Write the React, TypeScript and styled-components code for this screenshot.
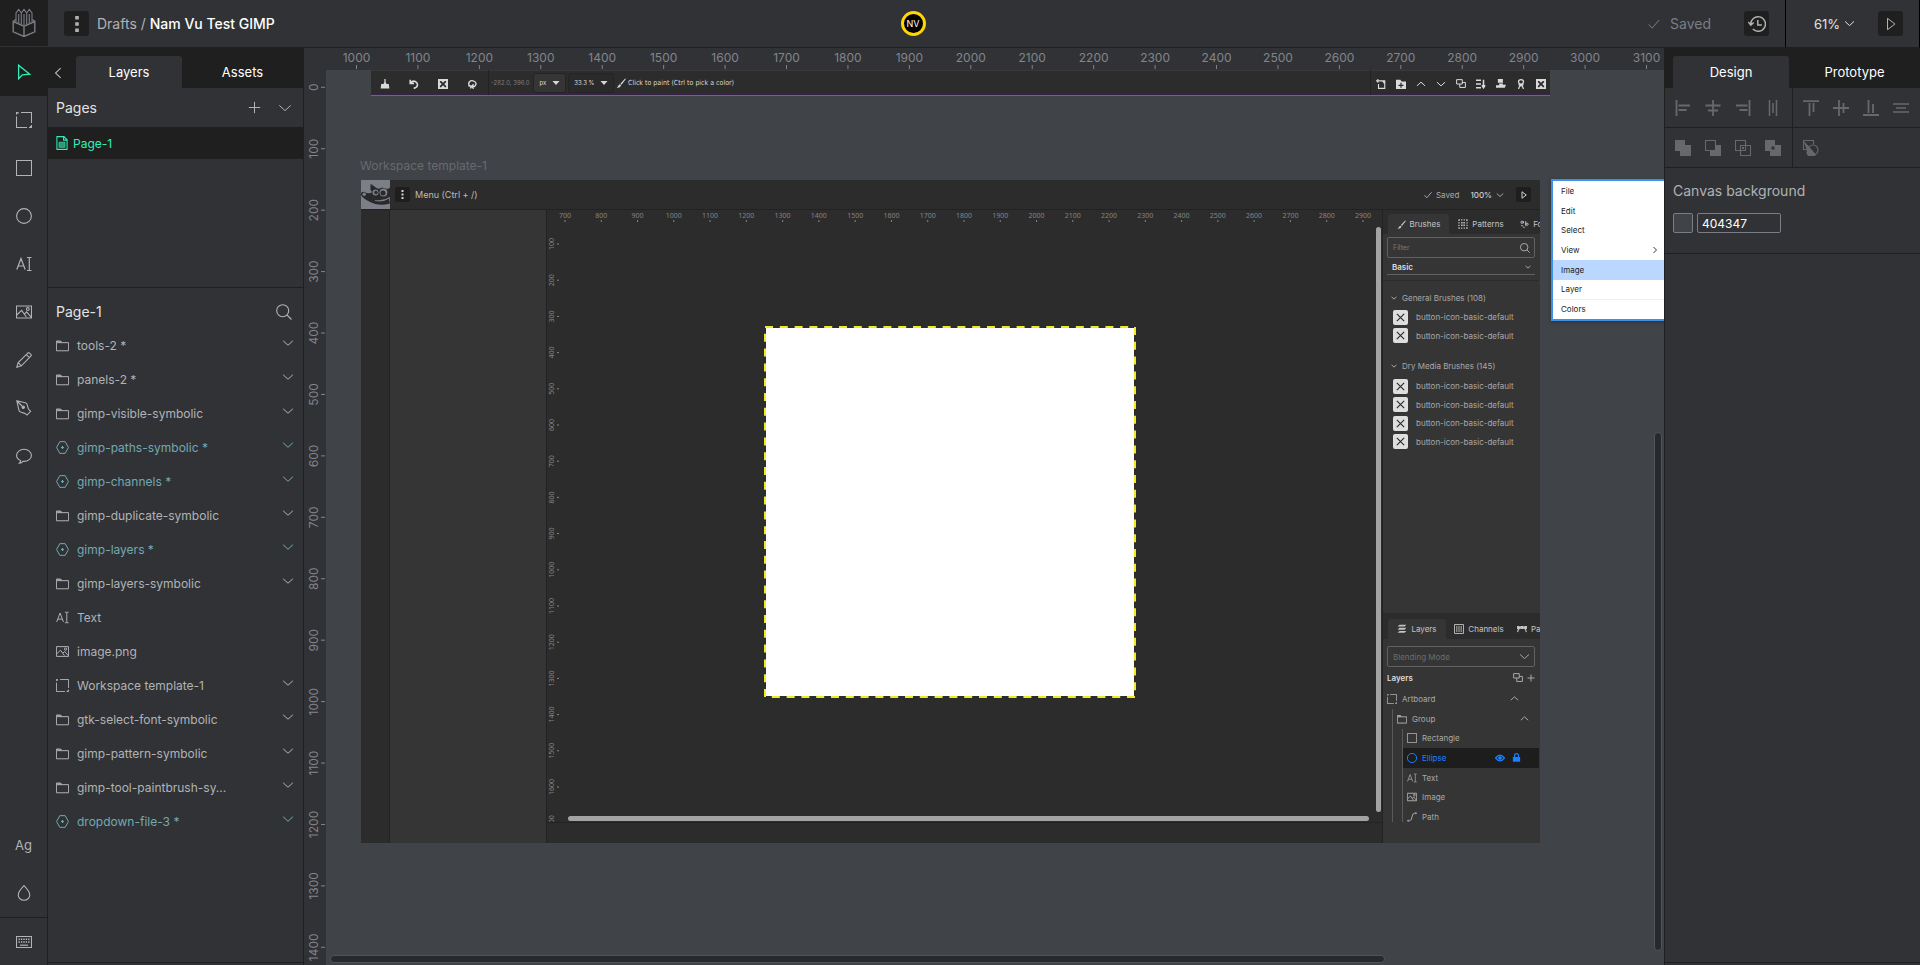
import React from "react";
import styled, { createGlobalStyle, css } from "styled-components";

const c = {
  ink: "#1f1f1f",
  panel: "#303236",
  canvas: "#404347",
  text: "#e3e3e3",
  soft: "#b1b2b5",
  dim: "#7b7d85",
  faint: "#66686c",
  green: "#31efb8",
  teal: "#73a9b1",
  boardDark: "#2c2c2c",
  board: "#353535",
  boardLine: "#222222",
  boardText: "#a8a8a8",
  blue: "#1a80ff",
};

const GlobalStyle = createGlobalStyle`
  *, *::before, *::after { box-sizing: border-box; }
  body { margin: 0; background: ${c.panel}; overflow: hidden; }
  body, button, input, select { font-family: Inter, "Noto Sans", sans-serif; }
  button, input, select { margin: 0; padding: 0; border: 0; background: none; color: inherit; }
  ul, h2, h3, p { margin: 0; padding: 0; list-style: none; font-weight: 400; }
  a { color: inherit; text-decoration: none; }
  svg { display: block; flex: none; }
`;

/* ---------- icons ---------- */

const shapes: Record<string, React.ReactNode> = {
  cursor: <path d="M2.6 1.2v13.6l3.7-4 7.4-.6z" strokeWidth="1.3" />,
  artboard: <path d="M5 .5h10.5V11M.5 4.5v11h10.5M.5 2.5v-2h2M15.5 13v2.5H13M1.5 1.5h1M14 14.5h1" />,
  rect: <path d="M.5.5h15v15H.5z" />,
  circle: <circle cx="8" cy="8" r="7.4" />,
  text: <path d="M.8 13.5 5 2.5l4.2 11M2.2 10h5.6M11 1.5h1.5q.8 0 .8.8v11.4q0 .8-.8.8H11M15.5 1.5H14q-.7 0-.7.8M15.5 14.5H14q-.7 0-.7-.8" strokeWidth="1.2" />,
  image: (
    <>
      <path d="M.5 2h15v12H.5zM.8 11 5.6 6.4l4.8 6.6M8.6 10l2-2.2 4.8 5.6" />
      <circle cx="11.8" cy="5" r="1.4" />
    </>
  ),
  pencil: <path d="m.8 15.2 1.4-4.6L12 .9q.6-.5 1.2 0l1.8 1.8q.6.6 0 1.3l-9.6 9.8zM2.2 10.6l3.2 3.2M10.4 2.6l3 3" />,
  pen: (
    <>
      <path d="m.8.8 8.4 1.9q1.6.4 2 2l1 3.6q.3.9 1 1.6l1.4 1.4-3.6 3.8-1.4-1.2q-.8-.6-1.6-.8l-3.4-1q-1.4-.5-1.7-1.9zM1 1l5 5" />
      <circle cx="7.2" cy="7.2" r="1.2" fill="currentColor" />
    </>
  ),
  comment: <path d="M4.6 12.4C2.2 11.4.6 9.700 .6 7.400.6 4 3.900 1.300 8 1.300s7.400 2.700 7.400 6.100-3.300 6-7.400 6q-.5 0-1-.1-1.400 1.700-3.600 1.800 1.200-1.200 1.200-2.700z" />,
  drop: <path d="M8 .7q5.800 6 5.800 9.300a5.800 5.300 0 0 1-11.600 0Q2.200 6.700 8 .7z" />,
  keyboard: (
    <>
      <path d="M.5 2.500h15v11H.5z" />
      <path d="M2.500 5.300h11M2.500 8h11" strokeWidth="1.400" strokeDasharray="1.400 1" />
      <path d="M4 11.200h8" strokeWidth="1.200" />
    </>
  ),
  left: <path d="M11 2.500 5.200 8l5.800 5.500" strokeWidth="1.300" />,
  right: <path d="m5 2 6 6-6 6" strokeWidth="1.800" />,
  down: <path d="m1.500 5 6.500 6 6.500-6" />,
  up: <path d="m1.500 11 6.500-6 6.500 6" />,
  plus: <path d="M8 1v14M1 8h14" />,
  search: (
    <>
      <circle cx="6.700" cy="6.700" r="6" />
      <path d="m11 11 4.500 4.500" />
    </>
  ),
  page: (
    <>
      <path d="M2.200.7h8l3.600 3.600v11H2.200zM9.800.7v4h4" strokeWidth="1.200" />
      <path d="M4.500 7h7v6h-7z" fill="currentColor" fillOpacity=".6" strokeWidth=".6" />
    </>
  ),
  folder: <path d="M.5 4.500v10h15v-10zM.5 4.500v-2h5.200l1.300 2M1 3.500h5.500" />,
  component: (
    <>
      <path d="M4.700.8h6.600L15.300 8l-4 7.200H4.700L.7 8z" />
      <path d="M8 6.200v3.600M6.200 8h3.600" strokeWidth="1.400" />
    </>
  ),
  check: <path d="m1 8.500 4.500 5L15 2.500" />,
  history: <path d="M2.500 8.500a6.500 6.500 0 1 1 1.800 4M.3 6.200l2.200 2.800 2.600-2.300M8.700 4.500v4.300h3.600" strokeWidth="1.300" />,
  play: <path d="M4 1.500v13L12.500 8z" />,
  dots: <path d="M6.200 0h3.600v3.600H6.200zM6.200 6.200h3.600v3.600H6.200zM6.200 12.400h3.600V16H6.200z" fill="currentColor" stroke="none" />,
  eye: (
    <>
      <path d="M1 8q7-9 14 0-7 9-14 0z" strokeWidth="2" />
      <circle cx="8" cy="8" r="2.200" fill="currentColor" />
    </>
  ),
  lock: (
    <>
      <path d="M1.500 7h13v8.500h-13z" fill="currentColor" stroke="none" />
      <path d="M4.500 7.500V4.500a3.500 3.500 0 0 1 7 0v3" strokeWidth="2" />
    </>
  ),
  path: (
    <>
      <path d="M2.500 14h1.500q3.500 0 4-6t4-6h1.500" />
      <circle cx="1.800" cy="14" r="1" />
      <circle cx="14.200" cy="2" r="1" />
    </>
  ),
  cross: <path d="m3.500 3.500 9 9m0-9-9 9" strokeWidth="1.400" />,
  duplicate: <path d="M1 1h9v7H1zM6 8v5.500h9V5.500h-5" />,
  alignLeft: <path d="M1.500 0v16M3.500 5.500H15M3.500 10h8" strokeWidth="1.800" />,
  alignCenter: <path d="M8 0v16M.5 5.500h15M3 10.500h10" strokeWidth="1.800" />,
  alignRight: <path d="M14.500 0v16M1 5.500h11.500M4.500 10h8" strokeWidth="1.800" />,
  distributeX: <path d="M4.500 0v16M11.500 0v16M8 3v10" strokeWidth="1.500" />,
  alignTop: <path d="M0 1.200h16M6.500 3v13M10.500 3v9" strokeWidth="1.800" />,
  alignMiddle: <path d="M0 8h16M6 0v16M10.500 3v10" strokeWidth="1.800" />,
  alignBottom: <path d="M0 15h16M5.500 0v13M10 4v9" strokeWidth="1.800" />,
  distributeY: <path d="M0 4h16M0 12h16M3 8h10" strokeWidth="1.500" />,
  union: <path d="M0 0h10v5h6v11H5v-5H0z" fill="currentColor" stroke="none" />,
  subtract: (
    <>
      <path d="M.5.500h10v10H.5z" />
      <path d="M11 5h5v11H5v-5h6z" fill="currentColor" stroke="none" />
    </>
  ),
  intersect: (
    <>
      <path d="M.5.5h10v10H.5zM5.500 5.500h10v10h-10z" />
      <path d="M7 7h2v2H7z" fill="currentColor" stroke="none" />
    </>
  ),
  exclude: <path d="M0 0h10v5h6v11H5v-5H0zM6.500 6.500v3h3v-3z" fill="currentColor" fillRule="evenodd" stroke="none" />,
  flatten: (
    <>
      <path d="M.5.500h10v4M.5.500v9h4" />
      <path d="M0 0l13 14.500A5 5 0 0 1 4 10z" fill="currentColor" stroke="none" />
      <circle cx="10" cy="10" r="5" />
    </>
  ),
  brush: <path d="M15 .5 7 9l1.800 1.600L15.500 2zM6.500 10q-3 .5-3 3L1 15.500q6 .5 7-4z" fill="currentColor" stroke="none" />,
  grid: (
    <>
      <path d="M1 1.500h14M1 14.500h14M1.500 1v14M14.500 1v14" strokeWidth="2" strokeDasharray="2 2" />
      <path d="M5 6h6M5 10h6" strokeWidth="2.400" strokeDasharray="2.400 1.200" />
    </>
  ),
  glyphs: (
    <>
      <circle cx="3.500" cy="4" r="2" strokeWidth="1.600" />
      <path d="M6 2v4M10 2v8M2 10h3M5 12q3 3 4 0" strokeWidth="1.600" />
      <circle cx="12.500" cy="7.500" r="2" strokeWidth="1.600" />
    </>
  ),
  stack: <path d="M4 1h11l-3 3H1zM4 6h11l-3 3H1zM4 11h11l-3 3H1z" fill="currentColor" stroke="none" />,
  bars: <path d="M.8.8h14.400v14.400H.8zM4.500 3v10M8 3v10M11.500 3v10" strokeWidth="1.400" />,
  curve: <path d="M1 5h14M1 13q1-7 7-8 6 1 7 8M0 4h3v3H0zM6.500 4h3v3h-3zM13 4h3v3h-3z" strokeWidth="1.800" />,
  caret: <path d="M1 4h14l-7 8z" fill="currentColor" stroke="none" />,
  stamp: <path d="M7 0h2v5l1.500 3H14l1 7H1l1-7h3.500L7 5z" fill="currentColor" stroke="none" />,
  undo: <path d="M2 1v6h6M3 6q3-4 7-2t3.500 6-6 5" strokeWidth="2.600" />,
  redo: <path d="M5 12Q1 8 4 4.500t8-.5 0 8H8M10.500 8.500 7.500 12l3 3.500M2 11h4v4" strokeWidth="2.200" />,
  clear: <path fillRule="evenodd" d="M0 0h16v16H0zM3 3v2l3 3-3 3v2h2l3-3 3 3h2v-2l-3-3 3-3V3h-2L8 6 5 3z" fill="currentColor" stroke="none" />,
  newItem: <path d="M6 3h8v12H4V8M0 3h6M3 0v6M9 3q4 0 4 4" strokeWidth="1.800" />,
  newFolder: <path fillRule="evenodd" d="M0 1h7l2 3h7v12H0zM7 6v3H4v2h3v3h2v-3h3V9H9V6z" fill="currentColor" stroke="none" />,
  merge: <path d="M0 2h8M0 8h8M0 14h8M12 1v13M9.500 10l2.500 4 2.500-4" strokeWidth="2.400" />,
  anchor: <path d="M3 0h8v6H3zM5 7h6v2h5l-2 5H0v-4h5z" fill="currentColor" stroke="none" />,
  mask: <path d="M8 1q4 0 4 3.500T8 8 4 4.500 8 1zM8 8v4M4 9h8M4 16l2-5h4l2 5" strokeWidth="2" />,
};

/* Line weight stays at one pixel when an icon is drawn below its 16px grid. */
const Icon = ({ name, size = 16 }: { name: string; size?: number }) => (
  <svg width={size} height={size} viewBox="0 0 16 16" fill="none" stroke="currentColor" strokeWidth={Math.max(1.1, 16 / size)} aria-hidden="true">
    {shapes[name]}
  </svg>
);

/* ---------- shell ---------- */

const Shell = styled.div`
  display: flex;
  flex-direction: column;
  height: 100vh;
  color: ${c.text};
  background: ${c.panel};
`;

const Header = styled.header`
  display: grid;
  grid-template-columns: 1fr auto 1fr;
  align-items: stretch;
  flex: none;
  height: 48px;
  border-bottom: 1px solid ${c.ink};
  border-right: 1px solid #000;
`;

const HeaderSide = styled.div<{ $end?: boolean }>`
  display: flex;
  align-items: center;
  justify-content: ${(p) => (p.$end ? "flex-end" : "flex-start")};
`;

const Logo = styled.a`
  display: grid;
  place-items: center;
  align-self: stretch;
  width: 48px;
  margin-bottom: 1px;
  background: ${c.ink};
  color: ${c.dim};
`;

const DarkButton = styled.button`
  display: grid;
  place-items: center;
  width: 25px;
  height: 25px;
  border-radius: 3px;
  background: ${c.ink};
  color: ${c.soft};
`;

const Crumbs = styled.nav`
  margin-left: 8px;
  font-size: 14px;
  line-height: 20px;
  color: ${c.soft};
  a:last-child { color: #fff; font-weight: 500; }
`;

const MenuSlot = styled.div`
  margin-left: 16px;
`;

const Avatar = styled.button`
  align-self: center;
  width: 25px;
  height: 25px;
  margin-left: -59px;
  border: 3px solid #ffd600;
  border-radius: 50%;
  background: #000;
  color: #fff;
  font-size: 9px;
  line-height: 19px;
`;

const Saved = styled.span`
  display: flex;
  align-items: center;
  gap: 10px;
  margin-right: 33px;
  color: ${c.dim};
  font-size: 14px;
`;

const ZoomGroup = styled.div`
  display: flex;
  align-items: center;
  justify-content: space-between;
  align-self: stretch;
  width: 134px;
  margin-left: 16px;
  padding: 0 16px 0 28px;
  border-left: 1px solid #000;
`;

const ZoomButton = styled.button`
  display: flex;
  align-items: center;
  gap: 4px;
  color: ${c.text};
  font-size: 13px;
`;

const Body = styled.div`
  display: flex;
  flex: 1;
  min-height: 0;
`;

const Toolbar = styled.nav`
  display: flex;
  flex-direction: column;
  flex: none;
  width: 48px;
  border-right: 1px solid ${c.ink};
`;

const ToolButton = styled.button<{ $active?: boolean; $ruled?: boolean }>`
  display: grid;
  place-items: center;
  height: 48px;
  flex: none;
  font-size: 13px;
  color: ${(p) => (p.$active ? c.green : c.soft)};
  background: ${(p) => (p.$active ? c.ink : "transparent")};
  border-top: ${(p) => (p.$ruled ? `1px solid ${c.ink}` : "0")};
`;

const Spacer = styled.div`
  flex: 1;
`;

/* ---------- side panels ---------- */

const LeftPanel = styled.aside`
  display: flex;
  flex-direction: column;
  flex: none;
  width: 256px;
  border-right: 1px solid ${c.ink};
`;

const RightPanel = styled.aside`
  display: flex;
  flex-direction: column;
  flex: none;
  width: 256px;
  border-left: 1px solid ${c.ink};
`;

const PanelFoot = styled.div`
  flex: none;
  height: 3px;
  margin-top: auto;
  border-top: 1px solid ${c.ink};
`;

const Tabs = styled.div<{ $inset?: number }>`
  display: flex;
  align-items: flex-end;
  flex: none;
  height: 40px;
  padding-left: ${(p) => p.$inset ?? 0}px;
  background: ${c.ink};
`;

const Tab = styled.button<{ $active?: boolean; $width?: number }>`
  flex: ${(p) => (p.$width ? "none" : "1")};
  width: ${(p) => (p.$width ? `${p.$width}px` : "auto")};
  height: 32px;
  border-radius: 3px 3px 0 0;
  background: ${(p) => (p.$active ? c.panel : "transparent")};
  color: #fff;
  font-size: 13px;
  font-weight: 400;
`;

const CollapseButton = styled.button`
  display: grid;
  place-items: center;
  width: 20px;
  height: 30px;
  margin-right: 8px;
  color: ${c.soft};
`;

const Section = styled.section<{ $fill?: boolean; $height?: number }>`
  flex: ${(p) => (p.$fill ? "1" : "none")};
  height: ${(p) => (p.$height ? `${p.$height}px` : "auto")};
  min-height: 0;
  border-bottom: ${(p) => (p.$fill ? "0" : `1px solid ${c.ink}`)};
`;

const SectionHead = styled.div<{ $height: number; $top?: number }>`
  display: flex;
  align-items: center;
  height: ${(p) => p.$height}px;
  padding: ${(p) => p.$top ?? 0}px 11px 0 8px;
  color: ${c.soft};
  h2 { flex: 1; color: ${c.text}; font-size: 14px; }
  button + button { margin-left: 17px; }
`;

const PageRow = styled.a`
  display: flex;
  align-items: center;
  gap: 4px;
  height: 32px;
  padding-left: 7px;
  background: ${c.ink};
  color: ${c.green};
  font-size: 12px;
`;

const LayerRow = styled.li<{ $component?: boolean }>`
  display: flex;
  align-items: center;
  gap: 8px;
  height: 34px;
  padding: 0 9px 0 8px;
  color: ${(p) => (p.$component ? c.teal : c.soft)};
  font-size: 12px;
`;

const LayerName = styled.span`
  flex: none;
  white-space: nowrap;
`;

const LayerToggle = styled.button`
  margin: 0 0 4px auto;
`;

const layers: [string, string][] = [
  ["folder", "tools-2 *"],
  ["folder", "panels-2 *"],
  ["folder", "gimp-visible-symbolic"],
  ["component", "gimp-paths-symbolic *"],
  ["component", "gimp-channels *"],
  ["folder", "gimp-duplicate-symbolic"],
  ["component", "gimp-layers *"],
  ["folder", "gimp-layers-symbolic"],
  ["text", "Text"],
  ["image", "image.png"],
  ["artboard", "Workspace template-1"],
  ["folder", "gtk-select-font-symbolic"],
  ["folder", "gimp-pattern-symbolic"],
  ["folder", "gimp-tool-paintbrush-sy..."],
  ["component", "dropdown-file-3 *"],
];

const ActionRow = styled.div`
  display: grid;
  grid-template-columns: 127px 1fr;
  height: 40px;
  border-bottom: 1px solid ${c.ink};
`;

const ActionGroup = styled.div`
  display: flex;
  align-items: center;
  gap: 14px;
  padding-left: 10px;
  color: ${c.faint};
  & + & { border-left: 1px solid ${c.ink}; }
`;

const BackgroundSection = styled.section`
  padding: 12px 8px 20px;
  border-bottom: 1px solid ${c.ink};
  h2 { font-size: 14px; line-height: 22px; color: ${c.soft}; margin-bottom: 11px; }
`;

const ColorField = styled.div`
  display: flex;
  gap: 4px;
  button { width: 20px; height: 20px; border: 1px solid ${c.dim}; border-radius: 2px; background: ${c.canvas}; }
  input { width: 84px; height: 20px; padding-left: 4px; border: 1px solid ${c.dim}; border-radius: 2px; font-size: 12px; color: #fff; }
`;

/* ---------- viewport ---------- */

const Viewport = styled.main`
  display: grid;
  grid-template: 22px 1fr / 22px 1fr;
  flex: 1;
  min-width: 0;
  min-height: 0;
`;

const RulerTop = styled.div`
  grid-column: 1 / 3;
  overflow: hidden;
`;

const RulerSide = styled.div`
  overflow: hidden;
`;

const Canvas = styled.div`
  position: relative;
  overflow: hidden;
  background: ${c.canvas};
`;

const ScrollThumb = styled.div<{ $vertical?: boolean }>`
  position: absolute;
  border: 1px solid #505358;
  border-radius: 4px;
  background: #27292d;
  ${(p) =>
    p.$vertical
      ? css`top: 362px; bottom: 14px; right: 2px; width: 8px;`
      : css`left: 4px; right: 279px; bottom: 2px; height: 8px;`}
`;

interface RulerProps {
  from: number;
  count: number;
  origin: number;
  step: number;
  size: number;
  font: number;
  color: string;
  vertical?: boolean;
  family?: string;
}

/* Axis with a tick and a centred number every hundred units. */
const Ruler = ({ from, count, origin, step, size, font, color, vertical, family }: RulerProps) => {
  const base = size > 16 ? 14 : vertical ? 7 : 8;
  const tick = size > 16 ? 17 : 10;
  const len = size > 16 ? 4 : 2;
  return (
    <svg width={vertical ? size : "100%"} height={vertical ? "100%" : size} fill={color} fontSize={font} textAnchor="middle" fontFamily={family}>
      {Array.from({ length: count }, (_, i) => {
        const at = origin + i * step;
        const label = from + i * 100;
        return vertical ? (
          <g key={i}>
            <text transform={`translate(${base},${at}) rotate(-90)`}>{label}</text>
            <rect x={tick} y={at - 0.5} width={len} height="1" />
          </g>
        ) : (
          <g key={i}>
            <text x={at} y={base}>{label}</text>
            <rect x={at - 0.5} y={tick} width="1" height={len} />
          </g>
        );
      })}
    </svg>
  );
};

/* ---------- objects on the canvas ---------- */

const Strip = styled.div`
  position: absolute;
  left: 45px;
  top: 0;
  display: flex;
  width: 1179px;
  height: 26px;
  border-bottom: 1px solid #6f6580;
  background: ${c.boardDark};
  box-shadow: inset 0 -1px 0 #39234a, inset 0 1px 0 #383838;
  color: #d8d8d8;
  font-size: 8px;
`;

const StripTools = styled.div<{ $side?: "left" | "right" }>`
  display: flex;
  align-items: center;
  flex: none;
  gap: ${(p) => (p.$side === "left" ? 19 : 10)}px;
  width: ${(p) => (p.$side === "left" ? 117 : 180)}px;
  padding: 2px 0 0 ${(p) => (p.$side === "left" ? 9 : 5)}px;
  border-left: ${(p) => (p.$side === "left" ? "0" : "1px solid #222")};
  color: #dadada;
`;

const StripStatus = styled.div`
  display: flex;
  align-items: center;
  flex: 1;
  gap: 2px;
  padding-left: 2px;
  border-left: 1px solid #222;
  white-space: nowrap;
`;

const Readout = styled.output`
  width: 40px;
  color: #7c7c7c;
  font-size: 6px;
`;

const StripButton = styled.button<{ $width: number; $flat?: boolean }>`
  display: flex;
  align-items: center;
  justify-content: space-evenly;
  width: ${(p) => p.$width}px;
  height: 20px;
  border: 1px solid #242424;
  border-radius: 3px;
  background: ${(p) => (p.$flat ? "#2a2a2a" : "#353535")};
  font-size: 6px;
  color: #d8d8d8;
`;

const Hint = styled.span`
  font-family: "DejaVu Sans Condensed", Inter, sans-serif;
  font-size: 7px;
`;

const BoardTitle = styled.p`
  position: absolute;
  left: 34px;
  top: 87px;
  color: #686a6e;
  font-size: 12px;
  line-height: 18px;
`;

const Board = styled.article`
  position: absolute;
  left: 35px;
  top: 110px;
  display: flex;
  flex-direction: column;
  width: 1179px;
  height: 663px;
  overflow: hidden;
  background: ${c.boardDark};
  color: ${c.boardText};
  font-size: 8px;
`;

const BoardHeader = styled.header`
  display: flex;
  align-items: center;
  flex: none;
  height: 30px;
  border-bottom: 1px solid ${c.boardLine};
`;

const BoardMenu = styled.button`
  display: grid;
  place-items: center;
  width: 15px;
  height: 15px;
  margin: 0 5px;
  border-radius: 2px;
  background: #1e1e1e;
  color: #d0d0d0;
`;

const BoardCommand = styled.span`
  color: #bcbcbc;
  font-size: 9px;
`;

const BoardStatus = styled.div`
  display: flex;
  align-items: center;
  gap: 4px;
  margin-left: auto;
  padding-right: 4px;
  b { margin-left: 7px; color: #d0d0d0; font-weight: 500; }
  button { margin-left: 8px; }
`;

const BoardBody = styled.div`
  display: flex;
  flex: 1;
  min-height: 0;
`;

const BoardTools = styled.div`
  flex: none;
  width: 29px;
  border-right: 1px solid ${c.boardLine};
`;

const BoardLeft = styled.div`
  flex: none;
  width: 157px;
  border-right: 1px solid ${c.boardLine};
  background: ${c.board};
`;

const BoardView = styled.div`
  flex: 1;
  display: grid;
  grid-template: 14px 1fr 21px / 14px 1fr;
  min-width: 0;
`;

const BoardRulerTop = styled.div`
  grid-column: 1 / 3;
  overflow: hidden;
`;

const BoardRulerSide = styled.div`
  overflow: hidden;
`;

const Stage = styled.div`
  position: relative;
`;

const Sheet = styled.svg`
  position: absolute;
  left: 203px;
  top: 102px;
`;

const StageThumb = styled.div<{ $vertical?: boolean }>`
  position: absolute;
  border-radius: 3px;
  background: #a3a3a3;
  ${(p) =>
    p.$vertical
      ? css`top: 3px; bottom: 10px; right: 1px; width: 5px;`
      : css`left: 7px; right: 13px; bottom: 1px; height: 5px;`}
`;

const BoardFooter = styled.div`
  grid-column: 1 / 3;
  border-top: 1px solid ${c.boardLine};
`;

const BoardRight = styled.div`
  display: flex;
  flex-direction: column;
  flex: none;
  width: 158px;
  border-left: 1px solid ${c.boardLine};
  background: ${c.board};
`;

const MiniTabs = styled.div<{ $height: number }>`
  display: flex;
  align-items: flex-end;
  flex: none;
  height: ${(p) => p.$height}px;
  padding-left: 5px;
  overflow: hidden;
  background: ${c.boardDark};
`;

const MiniTab = styled.button<{ $active?: boolean; $width: number }>`
  display: flex;
  align-items: center;
  justify-content: center;
  gap: 4px;
  flex: none;
  width: ${(p) => p.$width}px;
  height: 20px;
  border-radius: 3px 3px 0 0;
  background: ${(p) => (p.$active ? c.board : "transparent")};
  color: #c4c4c4;
  font-size: 8px;
`;

const Field = styled.label<{ $line?: boolean; $top: number }>`
  display: flex;
  align-items: center;
  width: 148px;
  height: ${(p) => (p.$line ? 16 : 21)}px;
  margin: ${(p) => p.$top}px 0 0 4px;
  padding: 0 4px 0 5px;
  border: ${(p) => (p.$line ? "0" : "1px solid #606065")};
  border-bottom: 1px solid #606065;
  border-radius: ${(p) => (p.$line ? 0 : 2)}px;
  color: ${c.boardText};
  input, select { flex: 1; min-width: 0; appearance: none; font-size: 8px; color: ${(p) => (p.$line ? "#dcdcdc" : "#6c6c70")}; font-weight: ${(p) => (p.$line ? 600 : 400)}; }
  input { font-size: 7px; }
  input::placeholder { color: #7a7a7e; opacity: 1; }
`;

const BrushPanel = styled.div`
  display: flex;
  flex-direction: column;
  height: 403px;
  flex: none;
`;

const Divider = styled.div`
  height: 1px;
  margin: 5px 2px 0 0;
  background: #2a2a2a;
`;

const BrushGroup = styled.section<{ $top: number }>`
  margin-top: ${(p) => p.$top}px;
  padding-left: 8px;
  h3 { display: flex; align-items: center; gap: 5px; height: 14px; font-size: 8px; }
`;

const BrushList = styled.ul<{ $height: number; $top: number }>`
  display: grid;
  grid-auto-rows: 1fr;
  height: ${(p) => p.$height}px;
  margin-top: ${(p) => p.$top}px;
  padding-left: 2px;
  li { display: flex; align-items: center; gap: 8px; }
`;

const BrushSwatch = styled.button`
  display: grid;
  place-items: center;
  width: 15px;
  height: 15px;
  border-radius: 2px;
  background: #dedede;
  color: #2a2a2a;
`;

const TreeHead = styled.div`
  display: flex;
  align-items: center;
  gap: 4px;
  height: 22px;
  padding: 0 5px 0 4px;
  h3 { flex: 1; color: #dcdcdc; font-size: 8px; font-weight: 600; }
`;

const Tree = styled.ul`
  position: relative;
  display: grid;
  grid-auto-rows: 1fr;
  height: 138px;
  margin-right: 1px;
`;

const TreeGuide = styled.span<{ $level: number }>`
  position: absolute;
  bottom: 5px;
  left: ${(p) => p.$level * 10 - 1}px;
  top: ${(p) => p.$level * 20}px;
  width: 1px;
  background: #5a5a5a;
`;

const TreeItem = styled.li<{ $level: number; $selected?: boolean }>`
  display: flex;
  align-items: center;
  gap: 5px;
  margin-left: ${(p) => p.$level * 10}px;
  padding: 0 ${(p) => (p.$selected ? 18 : 20 - p.$level * 10)}px 0 4px;
  background: ${(p) => (p.$selected ? "#1d1d1d" : "transparent")};
  color: ${(p) => (p.$selected ? c.blue : c.boardText)};
  span { flex: 1; }
  svg + svg { margin-left: 2px; }
`;

const Dropdown = styled.ul`
  position: absolute;
  left: 1225px;
  top: 109px;
  display: grid;
  grid-auto-rows: 1fr;
  width: 160px;
  height: 142px;
  border: 2px solid #3c92ea;
  background: #fff;
  box-shadow: 0 1px 4px rgba(0, 0, 0, 0.25);
  color: #222;
`;

const DropdownItem = styled.li<{ $active?: boolean; $ruled?: boolean }>`
  background: ${(p) => (p.$active ? "#b9d7ff" : "transparent")};
  box-shadow: ${(p) => (p.$ruled ? "inset 0 1px 0 #eeeeee" : "none")};
  button { display: flex; align-items: center; gap: 71px; width: 100%; height: 100%; padding-left: 8px; font-size: 8px; }
`;

const tree: [number, string, string][] = [
  [0, "artboard", "Artboard"],
  [1, "folder", "Group"],
  [2, "rect", "Rectangle"],
  [2, "circle", "Ellipse"],
  [2, "text", "Text"],
  [2, "image", "Image"],
  [2, "path", "Path"],
];

const Wilber = () => (
  <svg width="29" height="29" viewBox="0 0 29 29" aria-hidden="true">
    <rect width="29" height="29" fill="#7d7f87" />
    <path d="M0 15q0-4 3.500-3 4 2.500 8 0l-1.500-8 5.500 4q2.500 1.500 5.500-.5l6 1.500 2-1.500v10l-1 2 1 4q-12 3-20-1.500-7-3.500-9-7z" fill="#29292b" />
    <path d="M9.500 4v6l2.500 3 1-4.500z" fill="#29292b" />
    <circle cx="3.200" cy="14.200" r="1.700" fill="#7d7f87" />
    <circle cx="14.500" cy="12.500" r="3" fill="#7d7f87" />
    <circle cx="15" cy="12.500" r="1.700" fill="#29292b" />
    <circle cx="22.500" cy="12.500" r="3.900" fill="#7d7f87" />
    <circle cx="22" cy="13" r="2.500" fill="#29292b" />
    <path d="M14 20.500q8 1.500 15-3" fill="none" stroke="#7d7f87" strokeWidth="1.200" />
  </svg>
);

const PenpotMark = () => (
  <svg width="24" height="30" viewBox="0 0 24 30" fill="none" stroke="currentColor" strokeWidth="1.400" aria-hidden="true">
    <path d="M1.200 13.500v10.300L12 28.500l10.800-4.700V13.500L12 18.200zM12 18.200v10.300M1.200 13.500l2.600-2M22.800 13.500l-2.600-2" />
    <path d="M4 14.500V5l2.700-3.500L9.300 5v11.500M9.300 5 12 1.500 14.700 5v11.500M14.700 5l2.600-3.500L20 5v9.500M6.700 6v9.500M12 6v11M17.300 6v9.500" strokeWidth="1.100" />
  </svg>
);

const BrushRows = ({ count, height, top }: { count: number; height: number; top: number }) => (
  <BrushList $height={height} $top={top}>
    {Array.from({ length: count }, (_, i) => (
      <li key={i}>
        <BrushSwatch aria-label="Brush"><Icon name="cross" size={13} /></BrushSwatch>
        button-icon-basic-default
      </li>
    ))}
  </BrushList>
);

const ArtboardPreview = () => (
  <Board>
    <BoardHeader>
      <Wilber />
      <BoardMenu aria-label="Menu"><Icon name="dots" size={9} /></BoardMenu>
      <BoardCommand>Menu (Ctrl + /)</BoardCommand>
      <BoardStatus>
        <Icon name="check" size={8} />
        Saved
        <b>100%</b>
        <Icon name="down" size={8} />
        <BoardMenu aria-label="Play"><Icon name="play" size={8} /></BoardMenu>
      </BoardStatus>
    </BoardHeader>
    <BoardBody>
      <BoardTools />
      <BoardLeft />
      <BoardView>
        <BoardRulerTop>
          <Ruler from={700} count={23} origin={18} step={36.27} size={13} font={7} color="#858585" family="Noto Sans" />
        </BoardRulerTop>
        <BoardRulerSide>
          <Ruler from={100} count={17} origin={20} step={36.2} size={14} font={7} color="#858585" family="Noto Sans" vertical />
        </BoardRulerSide>
        <Stage>
          <Sheet width="372" height="372" viewBox="0 0 372 372">
            <rect x="1" y="1" width="370" height="370" fill="#fff" stroke="#2b2b2b" strokeWidth="2" />
            <rect x="1" y="1" width="370" height="370" fill="none" stroke="#f2e926" strokeWidth="2" strokeDasharray="8 6.800" />
          </Sheet>
          <StageThumb $vertical />
          <StageThumb />
        </Stage>
        <BoardFooter />
      </BoardView>
      <BoardRight>
        <BrushPanel>
          <MiniTabs $height={24}>
            <MiniTab $active $width={61}><Icon name="brush" size={9} />Brushes</MiniTab>
            <MiniTab $width={64}><Icon name="grid" size={10} />Patterns</MiniTab>
            <MiniTab $width={48}><Icon name="glyphs" size={9} />Fonts</MiniTab>
          </MiniTabs>
          <Field $top={3}>
            <input aria-label="Filter" placeholder="Filter" />
            <Icon name="search" size={10} />
          </Field>
          <Field $line $top={1}>
            <select aria-label="Brush set" defaultValue="Basic"><option>Basic</option></select>
            <Icon name="down" size={6} />
          </Field>
          <Divider />
          <BrushGroup $top={10}>
            <h3><Icon name="down" size={6} />General Brushes (108)</h3>
            <BrushRows count={2} height={37} top={3} />
          </BrushGroup>
          <BrushGroup $top={14}>
            <h3><Icon name="down" size={6} />Dry Media Brushes (145)</h3>
            <BrushRows count={4} height={74} top={4} />
          </BrushGroup>
        </BrushPanel>
        <MiniTabs $height={26}>
          <MiniTab $active $width={58}><Icon name="stack" size={10} />Layers</MiniTab>
          <MiniTab $width={66}><Icon name="bars" size={10} />Channels</MiniTab>
          <MiniTab $width={45}><Icon name="curve" size={10} />Paths</MiniTab>
        </MiniTabs>
        <Field $top={7}>
          <select aria-label="Blending Mode" defaultValue="Blending Mode"><option>Blending Mode</option></select>
          <Icon name="down" size={11} />
        </Field>
        <TreeHead>
          <h3>Layers</h3>
          <Icon name="duplicate" size={10} />
          <Icon name="plus" size={8} />
        </TreeHead>
        <Tree>
          <TreeGuide $level={1} />
          <TreeGuide $level={2} />
          {tree.map(([level, icon, label]) => (
            <TreeItem key={label} $level={level} $selected={label === "Ellipse"}>
              <Icon name={icon} size={10} />
              <span>{label}</span>
              {level < 2 && <Icon name="up" size={9} />}
              {label === "Ellipse" && <><Icon name="eye" size={10} /><Icon name="lock" size={9} /></>}
            </TreeItem>
          ))}
        </Tree>
      </BoardRight>
    </BoardBody>
  </Board>
);

export default function App() {
  return (
    <>
      <GlobalStyle />
      <Shell>
        <Header>
          <HeaderSide>
            <Logo href="#" aria-label="Home"><PenpotMark /></Logo>
            <MenuSlot><DarkButton aria-label="Menu"><Icon name="dots" /></DarkButton></MenuSlot>
            <Crumbs><a href="#">Drafts</a> / <a href="#">Nam Vu Test GIMP</a></Crumbs>
          </HeaderSide>
          <Avatar>NV</Avatar>
          <HeaderSide $end>
            <Saved><Icon name="check" size={12} />Saved</Saved>
            <DarkButton aria-label="History"><Icon name="history" size={18} /></DarkButton>
            <ZoomGroup>
              <ZoomButton>61%<Icon name="down" size={11} /></ZoomButton>
              <DarkButton aria-label="Play"><Icon name="play" size={14} /></DarkButton>
            </ZoomGroup>
          </HeaderSide>
        </Header>
        <Body>
          <Toolbar>
            {["cursor", "artboard", "rect", "circle", "text", "image", "pencil", "pen", "comment"].map((tool) => (
              <ToolButton key={tool} aria-label={tool} $active={tool === "cursor"}><Icon name={tool} /></ToolButton>
            ))}
            <Spacer />
            <ToolButton>Ag</ToolButton>
            <ToolButton aria-label="Colors"><Icon name="drop" /></ToolButton>
            <ToolButton aria-label="Shortcuts" $ruled><Icon name="keyboard" /></ToolButton>
          </Toolbar>

          <LeftPanel>
            <Tabs>
              <CollapseButton aria-label="Collapse"><Icon name="left" size={14} /></CollapseButton>
              <Tab $active $width={106}>Layers</Tab>
              <Tab>Assets</Tab>
            </Tabs>
            <Section $height={200}>
              <SectionHead $height={39}>
                <h2>Pages</h2>
                <button aria-label="Add page"><Icon name="plus" size={13} /></button>
                <button aria-label="Toggle pages"><Icon name="down" size={14} /></button>
              </SectionHead>
              <PageRow href="#"><Icon name="page" size={14} />Page-1</PageRow>
            </Section>
            <Section $fill>
              <SectionHead $height={40} $top={7}>
                <h2>Page-1</h2>
                <button aria-label="Search"><Icon name="search" /></button>
              </SectionHead>
              <ul>
                {layers.map(([icon, name]) => (
                  <LayerRow key={name} $component={icon === "component"}>
                    <Icon name={icon} size={13} />
                    <LayerName>{name}</LayerName>
                    {icon !== "text" && icon !== "image" && (
                      <LayerToggle aria-label={`Expand ${name}`}><Icon name="down" size={12} /></LayerToggle>
                    )}
                  </LayerRow>
                ))}
              </ul>
            </Section>
            <PanelFoot />
          </LeftPanel>

          <Viewport>
            <RulerTop>
              <Ruler from={1000} count={22} origin={52.5} step={61.43} size={22} font={12} color="#83858b" />
            </RulerTop>
            <RulerSide>
              <Ruler from={0} count={15} origin={17.3} step={61.43} size={22} font={12} color="#83858b" vertical />
            </RulerSide>
            <Canvas>
              <Strip>
                <StripTools $side="left">
                  {["stamp", "undo", "clear", "redo"].map((n) => <Icon key={n} name={n} size={10} />)}
                </StripTools>
                <StripStatus>
                  <Readout>-282.0, 396.0</Readout>
                  <StripButton $width={33}>px<Icon name="caret" size={8} /></StripButton>
                  <StripButton $width={46} $flat>33.3 %<Icon name="caret" size={8} /></StripButton>
                  <Icon name="brush" size={10} />
                  <Hint>Click to paint (Ctrl to pick a color)</Hint>
                </StripStatus>
                <StripTools $side="right">
                  {["newItem", "newFolder", "up", "down", "duplicate", "merge", "anchor", "mask", "clear"].map((n) => (
                    <Icon key={n} name={n} size={10} />
                  ))}
                </StripTools>
              </Strip>
              <BoardTitle>Workspace template-1</BoardTitle>
              <ArtboardPreview />
              <Dropdown>
                {["File", "Edit", "Select", "View", "Image", "Layer", "Colors"].map((item) => (
                  <DropdownItem key={item} $active={item === "Image"} $ruled={item === "Colors"}>
                    <button>{item}{item === "View" && <Icon name="right" size={8} />}</button>
                  </DropdownItem>
                ))}
              </Dropdown>
              <ScrollThumb $vertical />
              <ScrollThumb />
            </Canvas>
          </Viewport>

          <RightPanel>
            <Tabs $inset={8}>
              <Tab $active $width={116}>Design</Tab>
              <Tab>Prototype</Tab>
            </Tabs>
            <ActionRow>
              <ActionGroup>
                {["alignLeft", "alignCenter", "alignRight", "distributeX"].map((n) => (
                  <button key={n} aria-label={n}><Icon name={n} /></button>
                ))}
              </ActionGroup>
              <ActionGroup>
                {["alignTop", "alignMiddle", "alignBottom", "distributeY"].map((n) => (
                  <button key={n} aria-label={n}><Icon name={n} /></button>
                ))}
              </ActionGroup>
            </ActionRow>
            <ActionRow>
              <ActionGroup>
                {["union", "subtract", "intersect", "exclude"].map((n) => (
                  <button key={n} aria-label={n}><Icon name={n} /></button>
                ))}
              </ActionGroup>
              <ActionGroup>
                <button aria-label="Flatten"><Icon name="flatten" /></button>
              </ActionGroup>
            </ActionRow>
            <BackgroundSection>
              <h2>Canvas background</h2>
              <ColorField>
                <button aria-label="Pick color" />
                <input aria-label="Canvas background color" defaultValue="404347" />
              </ColorField>
            </BackgroundSection>
            <PanelFoot />
          </RightPanel>
        </Body>
      </Shell>
    </>
  );
}
